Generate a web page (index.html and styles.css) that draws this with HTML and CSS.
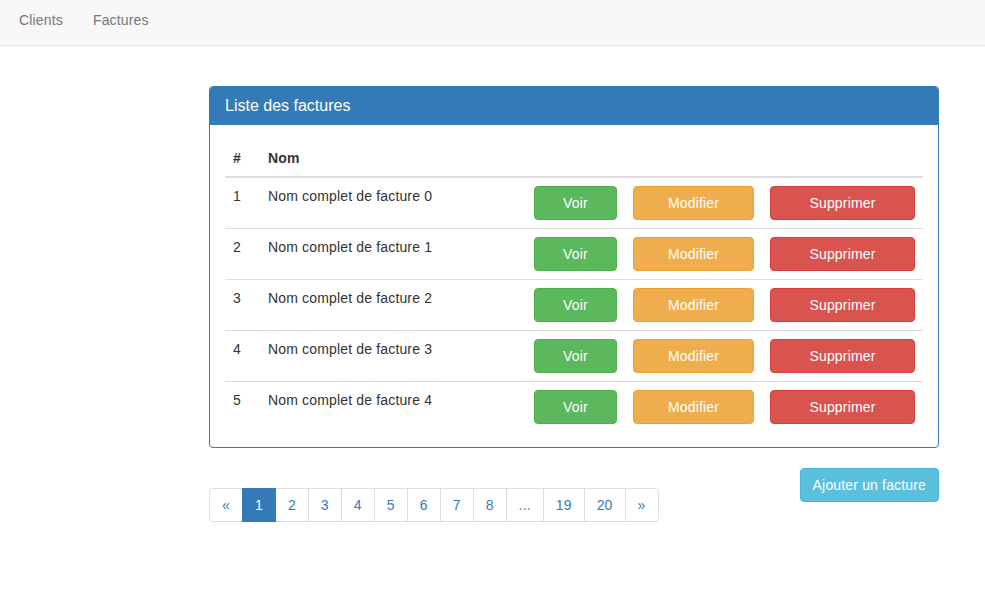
FILE: index.html
```html
<!DOCTYPE html>
<html lang="fr">
<head>
<meta charset="utf-8">
<title>Factures</title>
<link rel="stylesheet" href="styles.css">
</head>
<body>
<nav class="navbar">
  <ul class="nav">
    <li><a href="#">Clients</a></li>
    <li><a href="#">Factures</a></li>
  </ul>
</nav>
<main class="main">
  <section class="panel">
    <div class="panel-heading">Liste des factures</div>
    <div class="panel-body">
      <table class="table">
        <colgroup>
          <col class="c-num"><col class="c-nom"><col class="c-voir"><col class="c-mod"><col class="c-sup">
        </colgroup>
        <thead>
          <tr><th>#</th><th>Nom</th><th></th><th></th><th></th></tr>
        </thead>
        <tbody>
          <tr><td>1</td><td>Nom complet de facture 0</td><td><a class="btn btn-success" href="#">Voir</a></td><td><a class="btn btn-warning" href="#">Modifier</a></td><td><a class="btn btn-danger" href="#">Supprimer</a></td></tr>
          <tr><td>2</td><td>Nom complet de facture 1</td><td><a class="btn btn-success" href="#">Voir</a></td><td><a class="btn btn-warning" href="#">Modifier</a></td><td><a class="btn btn-danger" href="#">Supprimer</a></td></tr>
          <tr><td>3</td><td>Nom complet de facture 2</td><td><a class="btn btn-success" href="#">Voir</a></td><td><a class="btn btn-warning" href="#">Modifier</a></td><td><a class="btn btn-danger" href="#">Supprimer</a></td></tr>
          <tr><td>4</td><td>Nom complet de facture 3</td><td><a class="btn btn-success" href="#">Voir</a></td><td><a class="btn btn-warning" href="#">Modifier</a></td><td><a class="btn btn-danger" href="#">Supprimer</a></td></tr>
          <tr><td>5</td><td>Nom complet de facture 4</td><td><a class="btn btn-success" href="#">Voir</a></td><td><a class="btn btn-warning" href="#">Modifier</a></td><td><a class="btn btn-danger" href="#">Supprimer</a></td></tr>
        </tbody>
      </table>
    </div>
  </section>
  <div class="footer-row">
    <ul class="pagination">
      <li><a href="#">&laquo;</a></li>
      <li class="active"><a href="#">1</a></li>
      <li><a href="#">2</a></li>
      <li><a href="#">3</a></li>
      <li><a href="#">4</a></li>
      <li><a href="#">5</a></li>
      <li><a href="#">6</a></li>
      <li><a href="#">7</a></li>
      <li><a href="#">8</a></li>
      <li class="disabled"><span>...</span></li>
      <li><a href="#">19</a></li>
      <li><a href="#">20</a></li>
      <li><a href="#">&raquo;</a></li>
    </ul>
    <a class="btn btn-info btn-add" href="#">Ajouter un facture</a>
  </div>
</main>
</body>
</html>
```

FILE: styles.css
```css
* { box-sizing: border-box; }
html, body { margin: 0; padding: 0; }
body {
  font-family: "Liberation Sans", Arial, Helvetica, sans-serif;
  font-size: 14px;
  line-height: 20px;
  letter-spacing: 0.16px;
  color: #333;
  background: #fff;
}
a { text-decoration: none; }

.navbar {
  height: 46px;
  background: #f8f8f8;
  border-bottom: 1px solid #e7e7e7;
}
.nav {
  list-style: none;
  margin: 0;
  padding: 0 0 0 4px;
  display: flex;
}
.nav a {
  display: block;
  padding: 10px 15px 14px;
  color: #777;
}

.main {
  width: 730px;
  margin: 40px 0 0 209px;
}

.panel {
  border: 1px solid #337ab7;
  border-radius: 4px;
  background: #fff;
  margin-bottom: 20px;
}
.panel-heading {
  background: #337ab7;
  color: #fff;
  font-size: 16px;
  line-height: 18px;
  letter-spacing: 0;
  padding: 10px 15px;
  border-radius: 3px 3px 0 0;
}
.panel-body { padding: 15px; }

.table {
  width: 100%;
  border-collapse: collapse;
  border-spacing: 0;
  table-layout: fixed;
}
.c-num { width: 35px; }
.c-nom { width: 266px; }
.c-voir { width: 99px; }
.c-mod { width: 137px; }
.c-sup { width: 161px; }
.table th, .table td {
  padding: 8px;
  text-align: left;
  vertical-align: top;
  line-height: 20px;
}
.table th {
  font-weight: bold;
  vertical-align: bottom;
  border-bottom: 2px solid #ddd;
}
.table td { border-top: 1px solid #ddd; }
.table tbody tr:first-child td { border-top: 0; }

.btn {
  display: block;
  padding: 6px 12px;
  font-size: 14px;
  line-height: 20px;
  text-align: center;
  color: #fff;
  border: 1px solid transparent;
  border-radius: 4px;
  white-space: nowrap;
}
.btn-success { background: #5cb85c; border-color: #4cae4c; }
.btn-warning { background: #f0ad4e; border-color: #eea236; }
.btn-danger { background: #d9534f; border-color: #d43f3a; }
.btn-info { background: #5bc0de; border-color: #46b8da; }

.footer-row {
  display: flex;
  justify-content: space-between;
  align-items: flex-start;
}
.btn-add { display: inline-block; }

.pagination {
  list-style: none;
  display: flex;
  margin: 20px 0 0;
  padding: 0;
}
.pagination li > a, .pagination li > span {
  display: block;
  padding: 6px 12px;
  line-height: 20px;
  color: #337ab7;
  background: #fff;
  border: 1px solid #ddd;
  margin-left: -1px;
}
.pagination li:first-child > a { margin-left: 0; border-radius: 4px 0 0 4px; }
.pagination li:last-child > a { border-radius: 0 4px 4px 0; }
.pagination li.active > a {
  background: #337ab7;
  border-color: #337ab7;
  color: #fff;
  position: relative;
  z-index: 2;
}
.pagination li.disabled > span { color: #777; }
```
